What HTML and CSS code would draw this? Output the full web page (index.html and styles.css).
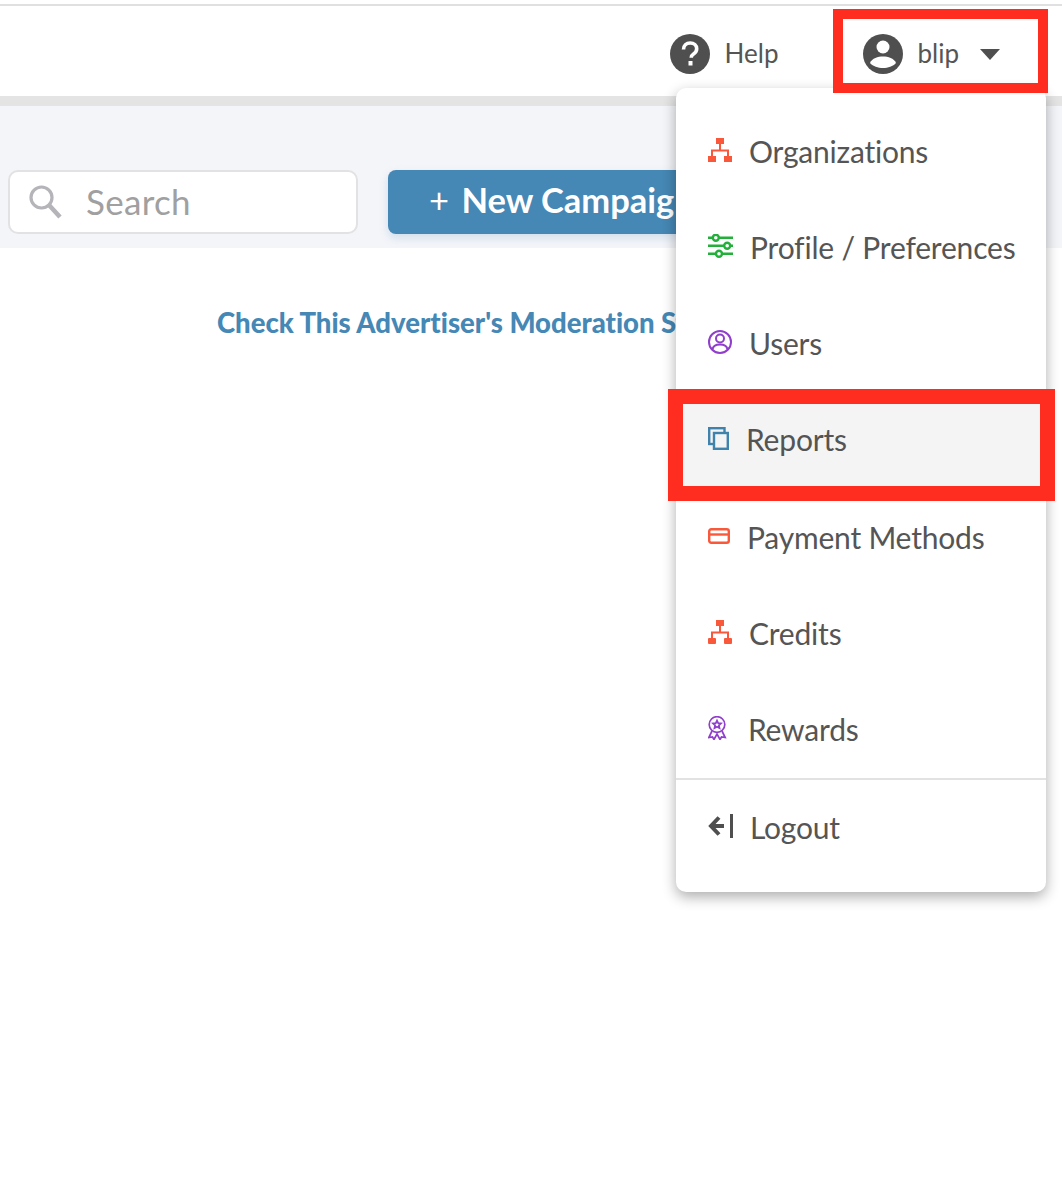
FILE: index.html
```html
<!DOCTYPE html>
<html lang="en">
<head>
<meta charset="utf-8">
<title>Account menu</title>
<link rel="stylesheet" href="styles.css">
</head>
<body>
<div class="page">
  <div class="topline"></div>
  <header class="header">
    <a class="help">
      <svg width="40" height="40" viewBox="0 0 40 40"><circle cx="20" cy="20" r="20" fill="#4f4f4f"/><path d="M13.5 15.5c0-4 2.8-6.5 6.7-6.5 3.800 0 6.500 2.300 6.500 5.700 0 2.500-1.200 3.900-3.200 5.300-1.800 1.200-2.300 2-2.300 3.700" fill="none" stroke="#fff" stroke-width="3.600"/><rect x="18.500" y="27" width="4" height="4.500" fill="#fff"/></svg>
      <span>Help</span>
    </a>
    <a class="user">
      <svg width="40" height="40" viewBox="0 0 40 40"><circle cx="20" cy="20" r="20" fill="#4f4f4f"/><circle cx="20" cy="13" r="6.500" fill="#fff"/><path d="M7 29c2-5 8-6.500 13-6.500s11 1.500 13 6.500c-3 3.500-8 5-13 5s-10-1.500-13-5z" fill="#fff"/></svg>
      <span>blip</span>
      <svg class="caret" width="20" height="11" viewBox="0 0 20 11"><path d="M0 0h20L10 11z" fill="#4f4f4f"/></svg>
    </a>
  </header>
  <div class="greybar"></div>
  <section class="toolbar">
    <label class="search">
      <svg width="36" height="36" viewBox="0 0 36 36"><circle cx="13.500" cy="13.500" r="10.500" fill="none" stroke="#b4b4b9" stroke-width="3.200"/><path d="M21 21l11 12" stroke="#b4b4b9" stroke-width="4.500" fill="none"/></svg>
      <span>Search</span>
    </label>
    <button class="new-campaign"><span class="plus">+</span> New Campaign</button>
  </section>
  <main class="content">
    <a class="moderation">Check This Advertiser's Moderation Status</a>
  </main>

  <nav class="menu">
    <a class="item"><svg width="24" height="24" viewBox="0 0 24 24"><g fill="#f9593a"><rect x="8" width="8" height="6"/><rect y="18" width="8" height="6"/><rect x="16" y="18" width="8" height="6"/></g><path d="M12 6v6M4 18v-5.500h16V18" fill="none" stroke="#f9593a" stroke-width="2"/></svg><span>Organizations</span></a>
    <a class="item"><svg width="25" height="24" viewBox="0 0 25 24"><g fill="none" stroke="#22b03a" stroke-width="2.400"><path d="M0 3.700h4.800M11 3.700h14M0 11.700h16M22.500 11.700H25M0 19.700h8M14 19.700h11"/><circle cx="7.800" cy="3.700" r="3"/><circle cx="19.200" cy="11.700" r="3"/><circle cx="11" cy="19.700" r="3"/></g></svg><span>Profile / Preferences</span></a>
    <a class="item"><svg width="24" height="24" viewBox="0 0 24 24"><g fill="none" stroke="#8f3fcb" stroke-width="2"><circle cx="12" cy="12" r="11"/><circle cx="12" cy="8.500" r="4"/><path d="M4.500 19.500c.5-3.500 3.500-5 7.500-5s7 1.500 7.500 5"/></g></svg><span>Users</span></a>
    <a class="item"><svg width="21" height="23" viewBox="0 0 21 23"><rect x="1.200" y="1.200" width="15.300" height="15.800" fill="none" stroke="#3f86b2" stroke-width="2.400"/><rect x="6" y="6" width="13.800" height="15.800" fill="#fff" stroke="#3f86b2" stroke-width="2.400"/></svg><span>Reports</span></a>
    <a class="item item-low"><svg width="22" height="16" viewBox="0 0 22 16"><rect x="1.200" y="1.200" width="19.600" height="13.600" rx="2" fill="none" stroke="#f9593a" stroke-width="2.400"/><path d="M1 6.500h20" stroke="#f9593a" stroke-width="2.400"/></svg><span>Payment Methods</span></a>
    <a class="item item-low"><svg width="24" height="24" viewBox="0 0 24 24"><g fill="#f9593a"><rect x="8" width="8" height="6"/><rect y="18" width="8" height="6" rx="1"/><rect x="16" y="18" width="8" height="6" rx="1"/></g><path d="M12 6v6M4 18v-5.500h16V18" fill="none" stroke="#f9593a" stroke-width="2"/></svg><span>Credits</span></a>
    <a class="item item-low"><svg width="23" height="24" viewBox="0 0 23 24"><g fill="none" stroke="#8f3fcb" stroke-width="1.700"><circle cx="9" cy="8.500" r="7.800"/><path d="M9 4.500l1.200 2.600 2.800.3-2.100 1.900.6 2.800-2.500-1.400-2.500 1.400.6-2.800L5 7.400l2.800-.3z"/><path d="M4 15L.8 21.500l3.700-.5 1.500 2.500L9 18l3 5.500 1.500-2.500 3.700.5L14 15"/></g></svg><span>Rewards</span></a>
    <div class="divider"></div>
    <a class="item logout"><svg width="25" height="24" viewBox="0 0 25 24"><g fill="none" stroke="#4f4f4f" stroke-width="4"><path d="M16 12H3M11 3.500L3 12l8 8.500"/><path d="M23.500 0v24" stroke-width="3"/></g></svg><span>Logout</span></a>
  </nav>

  <div class="mark mark-user"></div>
  <div class="mark mark-reports"></div>
</div>
</body>
</html>
```
FILE: styles.css
```css
* { box-sizing: border-box; }
html, body { margin: 0; padding: 0; background: #fff; }
body { font-family: "Lato", "Open Sans", sans-serif; color: #555; font-variant-ligatures: none; }
.page { position: relative; width: 1062px; height: 1178px; overflow: hidden; }

.topline { height: 6px; border-bottom: 2px solid #e0e0e0; }

.header { height: 90px; display: flex; align-items: center; justify-content: flex-end; padding-right: 62px; padding-top: 6px; font-size: 26px; }
.help, .user { display: flex; align-items: center; gap: 15px; }
.user { gap: 14px; }
.help span, .user span { margin-top: -2px; }
.help { margin-right: 85px; }
.caret { margin-left: 7px; margin-top: 1px; }

.greybar { height: 10px; background: #e4e4e4; }

.toolbar { height: 142px; background: #f4f5f9; display: flex; align-items: flex-start; gap: 30px; padding: 64px 0 0 8px; }
.search { width: 350px; height: 64px; background: #fff; border: 2px solid #e2e2e4; border-radius: 10px; display: flex; align-items: center; gap: 23px; padding-left: 18px; font-size: 35px; letter-spacing: .3px; color: #a0a0a0; }
.search span { margin: -2px 0 0 -1px; }
.new-campaign { width: 340px; height: 64px; border: 0; border-radius: 8px; background: #4587b5; color: #fff; font-family: inherit; font-size: 34.500px; font-weight: 700; text-align: left; padding: 0 0 6px 41px; white-space: nowrap; box-shadow: 0 4px 10px rgba(69,135,181,.2); }
.plus { font-weight: 400; margin-right: 4px; }

.content { padding: 58px 0 0 217px; }
.moderation { font-size: 27.500px; font-weight: 900; color: #4587b5; line-height: 34px; white-space: nowrap; }

.menu { position: absolute; left: 676px; top: 88px; width: 370px; height: 804px; padding-top: 15px; background: #fff; border-radius: 10px; box-shadow: 0 5px 14px rgba(0,0,0,.32); font-size: 30px; letter-spacing: -.2px; }
.item { height: 96px; display: flex; align-items: center; gap: 17px; padding-left: 32px; }
.item svg { flex: none; margin-top: -2px; }
.item-low { position: relative; top: 2px; }
.divider { height: 2px; margin-top: 3px; background: #e2e2e2; }
.logout { margin-top: -1px; }

.mark { position: absolute; border-style: solid; border-color: #ff2d20; }
.mark-user { left: 833px; top: 9px; width: 215px; height: 84px; border-width: 10px; }
.mark-reports { left: 668px; top: 389px; width: 387px; height: 112px; border-width: 15px; background: rgba(60,60,60,.06); background-clip: padding-box; }
```
